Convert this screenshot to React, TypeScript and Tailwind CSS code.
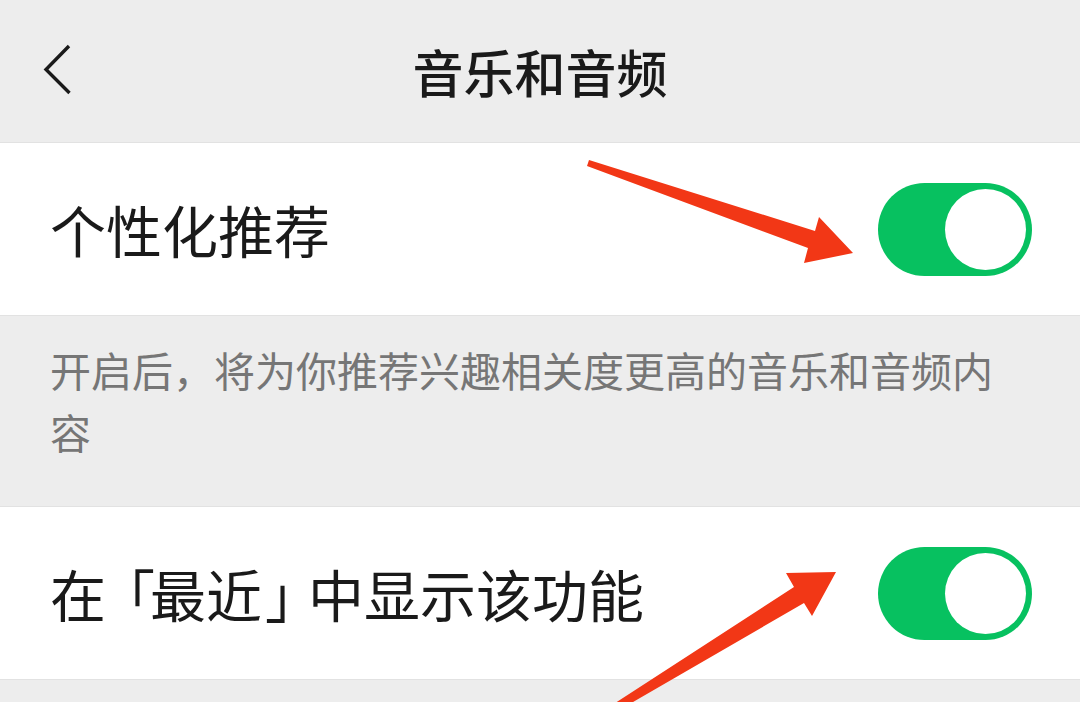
import React from "react";

const font = { fontFamily: '"Noto Sans CJK SC", "Noto Sans", sans-serif' };

function Toggle() {
  return (
    <div className="flex h-[93px] w-[154px] items-center justify-end rounded-full bg-[#07c160] pr-[6px]">
      <div className="size-[81px] rounded-full bg-white" />
    </div>
  );
}

function Row({ children }: { children: React.ReactNode }) {
  return (
    <div className="flex h-[174px] items-center justify-between border-y border-[#e2e2e2] bg-white pl-[50px] pr-[48px]">
      <span className="text-[56px] leading-none text-[#1a1a1a]">{children}</span>
      <Toggle />
    </div>
  );
}

export default function App() {
  return (
    <div className="relative h-[702px] w-[1080px] overflow-hidden bg-[#ededed]" style={font}>
      <header className="relative flex h-[142px] items-center justify-center">
        <svg className="absolute left-[40px] top-[40px]" width="40" height="60" viewBox="0 0 40 60" fill="none">
          <path d="M29 6 L6 29.5 L29.5 53" stroke="#1a1a1a" strokeWidth="3.4" strokeLinecap="butt" strokeLinejoin="miter" />
        </svg>
        <h1 className="text-[51px] font-medium leading-none text-[#1a1a1a]">音乐和音频</h1>
      </header>

      <Row>个性化推荐</Row>

      <div className="h-[190px] pl-[50px] pr-[70px] pt-[22px]">
        <p className="text-[41px] leading-[62px] text-[#767676]">开启后，将为你推荐兴趣相关度更高的音乐和音频内容</p>
      </div>

      <Row>
        <span className="tracking-[-7px]">在</span>
        <span className="tracking-[-5px]">「</span>最近<span className="ml-[3px] tracking-[-13px]">」</span>中显示该功能
      </Row>

      <svg className="pointer-events-none absolute inset-0" width="1080" height="702" viewBox="0 0 1080 702">
        <polygon points="589,160 815,231 819,217 853,253 804,263 808,248 587,166" fill="#f23716" />
        <polygon points="589,720 794,587 786,573 836,572 812,616 804,603 602,720" fill="#f23716" />
      </svg>
    </div>
  );
}
